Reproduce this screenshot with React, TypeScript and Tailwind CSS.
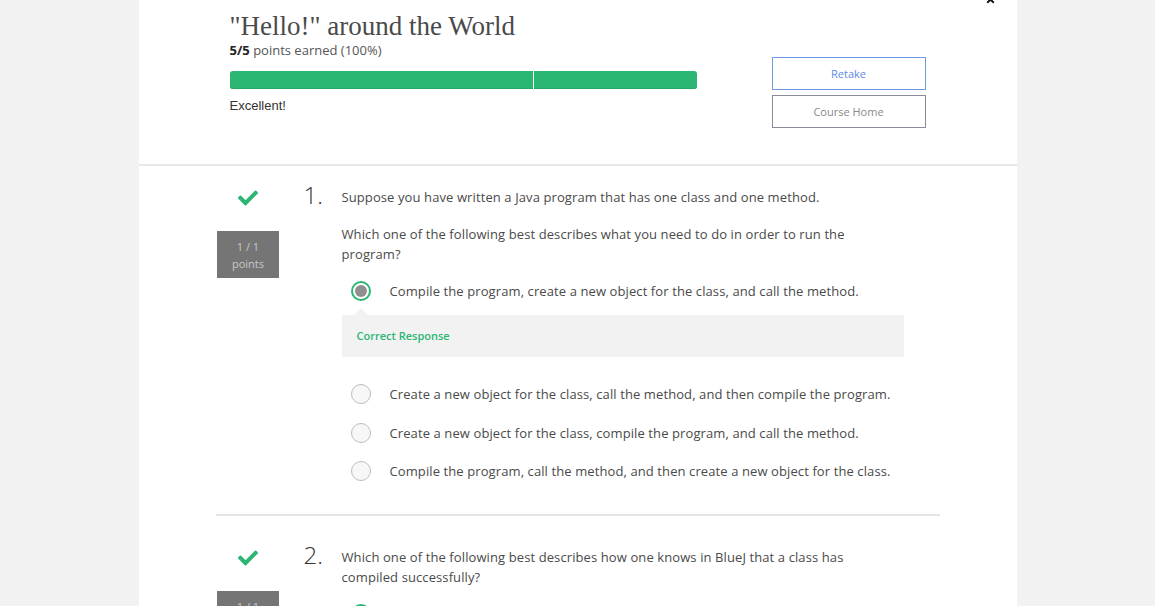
import { FaCheck, FaTimes } from 'react-icons/fa';

const body = "font-['Open_Sans','Noto_Sans',sans-serif]";

interface Question {
  num: number;
  prompt: string[];
  options: string[];
  chosen: number;
}

const QUESTIONS: Question[] = [
  {
    num: 1,
    prompt: [
      'Suppose you have written a Java program that has one class and one method.',
      'Which one of the following best describes what you need to do in order to run the program?',
    ],
    options: [
      'Compile the program, create a new object for the class, and call the method.',
      'Create a new object for the class, call the method, and then compile the program.',
      'Create a new object for the class, compile the program, and call the method.',
      'Compile the program, call the method, and then create a new object for the class.',
    ],
    chosen: 0,
  },
  {
    num: 2,
    prompt: ['Which one of the following best describes how one knows in BlueJ that a class has compiled successfully?'],
    options: ['The class is no longer shaded.'],
    chosen: 0,
  },
];

const Radio = ({ checked }: { checked: boolean }) =>
  checked ? (
    <span className="w-5 h-5 rounded-full border-2 border-[#2bb673] bg-white flex items-center justify-center flex-shrink-0">
      <span className="w-[12px] h-[12px] rounded-full bg-[#8f8f8f]" />
    </span>
  ) : (
    <span className="w-5 h-5 rounded-full border border-[#bdbdbd] bg-[#f7f7f7] flex-shrink-0" />
  );

const QuestionBlock = ({ q, first }: { q: Question; first: boolean }) => (
  <div className={`flex ${first ? 'pt-[22px]' : 'pt-[32px]'} pb-[33px] ${first ? 'border-b-2 border-[#e5e5e5]' : ''}`}>
    {/* left column: check + points */}
    <div className="w-[63px] ml-px flex flex-col items-center flex-shrink-0">
      <FaCheck className="text-[#2bb673] w-[20px] h-[20px]" />
      <div className="mt-[23px] w-[62px] h-[47px] bg-[#757575] flex flex-col items-center justify-center text-[11px] leading-[17px] text-[#c8c8c8]">
        <span>1 / 1</span>
        <span>points</span>
      </div>
    </div>

    <div className="w-[24px] flex-shrink-0" />
    <div className="w-[38px] flex-shrink-0 text-[24px] leading-[24px] font-light text-[#333] -mt-[5px]">{q.num}.</div>

    <div className="flex-1 text-[13px] text-[#4a4a4a] tracking-[0.1px] pr-[36px] -mt-px">
      {q.prompt.map((p, i) => (
        <p key={i} className={`leading-[20px] max-w-[520px] ${i > 0 ? 'mt-[17px]' : ''}`}>
          {p}
        </p>
      ))}

      <div className="mt-[17px]">
        {q.options.map((opt, i) => (
          <div key={i}>
            <div className={`flex items-center h-5 pl-[9px] ${i > 1 ? 'mt-[18.5px]' : ''}`}>
              <Radio checked={i === q.chosen} />
              <span className="ml-[19px] leading-[20px]">{opt}</span>
            </div>
            {i === q.chosen && q.num === 1 && (
              <div className="relative mt-[14px] mb-[27px] h-[42px] bg-[#f2f2f2] flex items-center pl-[15px]">
                <span className="absolute -top-[7px] left-[12px] w-0 h-0 border-l-[7px] border-r-[7px] border-b-[7px] border-l-transparent border-r-transparent border-b-[#f2f2f2]" />
                <span className="text-[11px] font-semibold tracking-normal text-[#2bb673]">Correct Response</span>
              </div>
            )}
          </div>
        ))}
      </div>
    </div>
  </div>
);

export default function App() {
  return (
    <div className={`min-h-screen bg-[#f2f2f2] ${body}`}>
      <div className="w-[878px] mx-auto bg-white min-h-screen">
        {/* header */}
        <div className="relative h-[166px] border-b-2 border-[#e8e8e8] px-[91px] flex justify-between">
          <FaTimes className="absolute -top-[6px] right-[21px] w-[11px] h-[11px] text-[#111]" />
          <div className="w-[467px]">
            <h1 className="pt-[10px] font-['Liberation_Serif','DejaVu_Serif',serif] text-[27px] leading-[32px] text-[#4a4a4a]">
              "Hello!" around the World
            </h1>
            <p className="text-[13px] leading-[18px] text-[#555] -mt-px">
              <strong className="font-bold text-[#222]">5/5</strong> points earned (100%)
            </p>
            <div className="mt-[12px] h-[18px] flex gap-px">
              <div className="w-[303px] bg-[#2bb673] rounded-l-[3px] shadow-[inset_0_-1px_0_#23a865]" />
              <div className="flex-1 bg-[#2bb673] rounded-r-[3px] shadow-[inset_0_-1px_0_#23a865]" />
            </div>
            <p className="mt-[8px] text-[13px] leading-[18px] text-[#333] font-['Liberation_Sans',sans-serif]">Excellent!</p>
          </div>
          <div className="pt-[57px] flex flex-col gap-[5px]">
            <button className="w-[154px] h-[33px] border border-[#6f9be6] text-[11px] text-[#5f8ae0] bg-white pt-px">Retake</button>
            <button className="w-[154px] h-[33px] border border-[#8c8a99] text-[11px] text-[#888] bg-white pt-px">Course Home</button>
          </div>
        </div>

        {/* questions */}
        <div className="px-[77px]">
          {QUESTIONS.map((q, i) => (
            <QuestionBlock key={q.num} q={q} first={i === 0} />
          ))}
        </div>
      </div>
    </div>
  );
}
